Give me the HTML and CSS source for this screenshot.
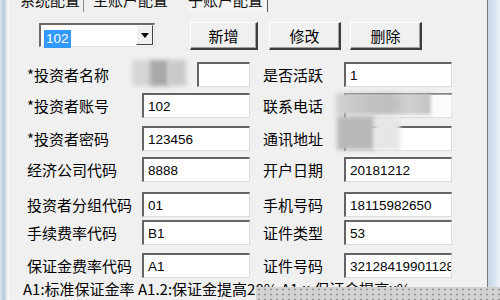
FILE: index.html
```html
<!DOCTYPE html>
<html lang="zh-CN">
<head>
    <meta charset="UTF-8">
    <title>子账户配置</title>
    <link rel="stylesheet" href="styles.css">
</head>
<body>
    <div class="window">
        <div class="frame-left"></div>
        <div class="page">
            <div class="tabs">
                <span class="tab first">系统配置</span>
                <span class="tab second">主账户配置</span>
                <span class="tab active">子账户配置</span>
            </div>

            <div class="toolbar">
                <div class="combo">
                    <span class="combo-text"><span class="selected">102</span></span>
                    <span class="combo-btn">
                        <svg width="8" height="5" viewBox="0 0 8 5"><path d="M0 0h8L4 5z" fill="#000"/></svg>
                    </span>
                </div>
                <button class="btn btn-add">新增</button>
                <button class="btn btn-edit">修改</button>
                <button class="btn btn-del">删除</button>
            </div>

            <div class="form">
                <label class="lbl">*投资者名称</label>
                <div class="field"><span class="box box-short"></span></div>
                <label class="lbl">是否活跃</label>
                <div class="field"><span class="box">1</span></div>

                <label class="lbl">*投资者账号</label>
                <div class="field"><span class="box">102</span></div>
                <label class="lbl">联系电话</label>
                <div class="field"><span class="box"></span></div>

                <label class="lbl">*投资者密码</label>
                <div class="field"><span class="box">123456</span></div>
                <label class="lbl">通讯地址</label>
                <div class="field"><span class="box"></span></div>

                <label class="lbl">经济公司代码</label>
                <div class="field"><span class="box">8888</span></div>
                <label class="lbl">开户日期</label>
                <div class="field"><span class="box">20181212</span></div>

                <label class="lbl">投资者分组代码</label>
                <div class="field"><span class="box">01</span></div>
                <label class="lbl">手机号码</label>
                <div class="field"><span class="box">18115982650</span></div>

                <label class="lbl">手续费率代码</label>
                <div class="field"><span class="box">B1</span></div>
                <label class="lbl">证件类型</label>
                <div class="field"><span class="box">53</span></div>

                <label class="lbl">保证金费率代码</label>
                <div class="field"><span class="box">A1</span></div>
                <label class="lbl">证件号码</label>
                <div class="field"><span class="box">321284199011285</span></div>
            </div>

            <div class="note">A1:标准保证金率 A1.2:保证金提高20% A1.x:保证金提高x%</div>
        </div>
        <div class="frame-right"></div>
    </div>

    <!-- mosaic over private values -->
    <div class="blur blur-name-a"></div>
    <div class="blur blur-name-b"></div>
    <div class="blur blur-name-c"></div>
    <div class="blur blur-phone"></div>
    <div class="blur blur-phone-b"></div>
    <div class="blur blur-addr"></div>
    <div class="blur blur-addr-b"></div>
    <div class="dots"></div>
</body>
</html>
```

FILE: styles.css
```css
* {
    margin: 0;
    padding: 0;
    box-sizing: border-box;
}

body {
    width: 500px;
    height: 300px;
    overflow: hidden;
    position: relative;
    background: #f0f0f0;
    font-family: "Noto Sans CJK SC", "Liberation Sans", sans-serif;
    font-size: 15px;
    color: #000;
}

.window {
    display: flex;
    height: 300px;
}

.frame-left {
    width: 9px;
    background: linear-gradient(to right, #dfe8f1, #b9cbdd 35%, #c9d7e5 60%, #eef2f6 80%, #ffffff);
}

.frame-right {
    width: 13px;
    border-left: 1px solid #7a7a7a;
    background: linear-gradient(to right, #c6d6e6, #d4e1ee 50%, #eef3f8);
}

.page {
    flex: 1;
    display: flex;
    flex-direction: column;
}

/* Tabs, cut at the top */
.tabs {
    height: 12px;
    display: flex;
    overflow: hidden;
    padding-left: 11px;
}

.tab {
    display: block;
    line-height: 15px;
    margin-top: -8px;
    color: #111;
}

.tab.first {
    padding-right: 3px;
    border-right: 1px solid #8a8a8a;
}

.tab.second {
    padding-left: 9px;
    padding-right: 20px;
}

.tab.active {
    padding-right: 4px;
    background: #f4f4f4;
    border-right: 1px solid #555;
}

/* Toolbar */
.toolbar {
    display: flex;
    align-items: flex-start;
    margin-top: 10px;
    height: 28px;
    padding-left: 30px;
}

.combo {
    display: flex;
    width: 116px;
    height: 24px;
    margin-top: 1px;
    background: #fff;
    border-top: 2px solid #6a6a6a;
    border-left: 2px solid #6a6a6a;
    border-right: 1px solid #e4e4e4;
    border-bottom: 1px solid #e4e4e4;
}

.combo-text {
    flex: 1;
    padding: 1px 0 0 3px;
}

.selected {
    display: inline-block;
    background: #3399ff;
    color: #fff;
    font-family: "Liberation Sans", sans-serif;
    font-size: 13.5px;
    line-height: 18px;
    padding: 0 2px;
}

.combo-btn {
    width: 17px;
    margin: 0 1px 1px 0;
    display: flex;
    align-items: center;
    justify-content: center;
    background: #f0f0f0;
    border-top: 1px solid #fff;
    border-left: 1px solid #fff;
    border-right: 1px solid #404040;
    border-bottom: 1px solid #404040;
}

.btn {
    height: 28px;
    background: #f0f0f0;
    font-family: "Noto Sans CJK SC", sans-serif;
    font-size: 15px;
    color: #000;
    border-top: 1px solid #ffffff;
    border-left: 1px solid #ffffff;
    border-right: 2px solid #3c3c3c;
    border-bottom: 2px solid #3c3c3c;
    box-shadow: inset -1px -1px 0 #a0a0a0;
}

.btn-add {
    width: 68px;
    margin-left: 35px;
}

.btn-edit {
    width: 72px;
    margin-left: 11px;
}

.btn-del {
    width: 72px;
    margin-left: 9px;
}

/* Form grid */
.form {
    display: grid;
    grid-template-columns: 115px 121px 81px 108px;
    grid-template-rows: 31px 33px 31px 35px 28px 33px 27px;
    margin-top: 12px;
    padding-left: 18px;
}

.lbl {
    height: 25px;
    line-height: 25px;
    white-space: nowrap;
}

.field {
    display: flex;
}

.box {
    display: block;
    width: 108px;
    height: 25px;
    padding: 3px 0 0 4px;
    background: #fff;
    border-top: 2px solid #646464;
    border-left: 2px solid #646464;
    border-right: 1px solid #dcdcdc;
    border-bottom: 1px solid #dcdcdc;
    font-family: "Liberation Sans", sans-serif;
    font-size: 13.5px;
    line-height: 17px;
    white-space: nowrap;
    overflow: hidden;
}

.box-short {
    width: 53px;
    margin-left: 55px;
}

.note {
    height: 18px;
    line-height: 18px;
    padding-left: 14px;
    white-space: nowrap;
}

/* Mosaic blobs laid over hidden values */
.blur {
    position: absolute;
    filter: blur(2px);
}

.blur-name-a {
    left: 132px;
    top: 60px;
    width: 20px;
    height: 26px;
    background: #d6d6d6;
}

.blur-name-b {
    left: 150px;
    top: 60px;
    width: 19px;
    height: 26px;
    background: #a9a9a9;
}

.blur-name-c {
    left: 168px;
    top: 60px;
    width: 18px;
    height: 26px;
    background: #cacaca;
}

.blur-phone {
    left: 336px;
    top: 93px;
    width: 96px;
    height: 22px;
    background: linear-gradient(to right, #d2d2d2, #c4c4c4 30%, #bdbdbd 55%, #d0d0d0 75%, #c2c2c2);
}

.blur-phone-b {
    left: 432px;
    top: 95px;
    width: 19px;
    height: 20px;
    background: #fbfbfb;
}

.blur-addr {
    left: 337px;
    top: 116px;
    width: 38px;
    height: 34px;
    background: #b9b9b9;
}

.blur-addr-b {
    left: 374px;
    top: 118px;
    width: 26px;
    height: 32px;
    background: #e6e6e6;
}

.dots {
    position: absolute;
    left: 256px;
    top: 287px;
    width: 244px;
    height: 13px;
    background-color: #d2d2d2;
    background-image: radial-gradient(circle, #8e8e8e 0.8px, transparent 1.2px);
    background-size: 6px 5px;
}
```
